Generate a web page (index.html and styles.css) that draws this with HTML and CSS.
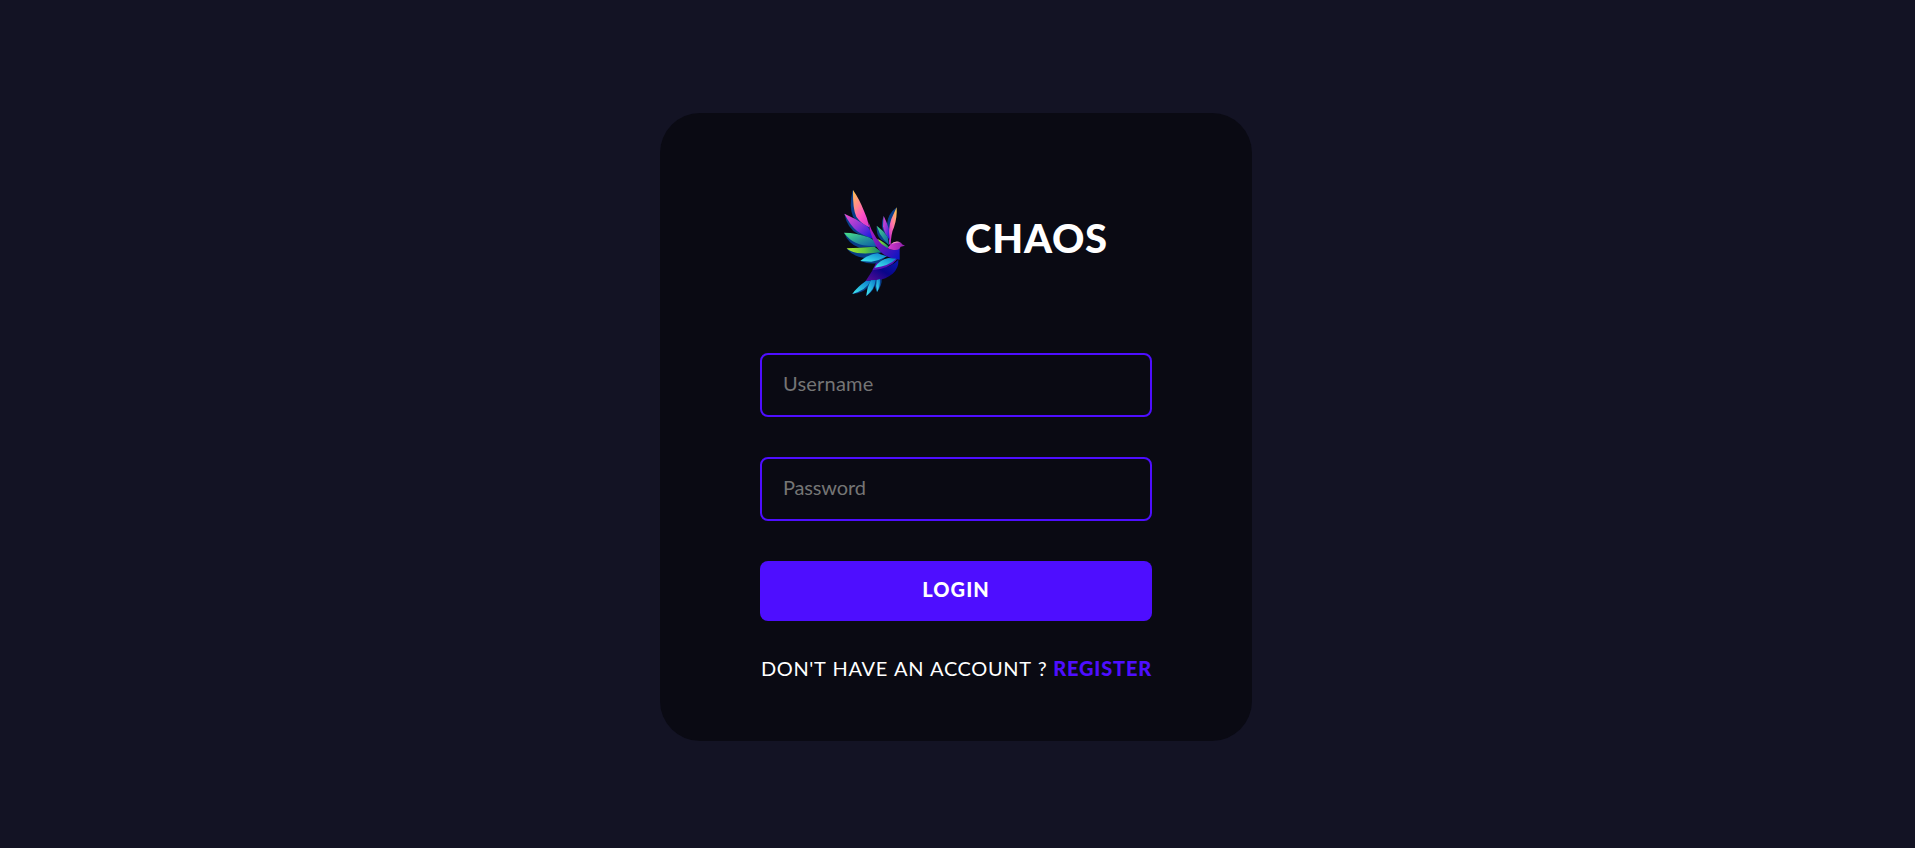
FILE: index.html
```html
<!DOCTYPE html>
<html lang="en">
<head>
<meta charset="utf-8">
<title>Chaos</title>
<link rel="stylesheet" href="styles.css">
</head>
<body>
<main class="page">
<form class="card">
<div class="brand">
<svg class="logo" viewBox="579 267 189 324" aria-hidden="true">
<defs>
<linearGradient id="flame" x1="0" y1="0" x2=".6" y2="1"><stop offset="0" stop-color="#ffc64f"/><stop offset=".45" stop-color="#ff8790"/><stop offset=".75" stop-color="#ff4fc8"/><stop offset="1" stop-color="#e03fc8"/></linearGradient>
<linearGradient id="flame2" x1=".8" y1="0" x2=".2" y2="1"><stop offset="0" stop-color="#ffc64f"/><stop offset=".5" stop-color="#ff70ad"/><stop offset="1" stop-color="#c020d0"/></linearGradient>
<linearGradient id="violet" x1="0" y1="0" x2="1" y2="1"><stop offset="0" stop-color="#f04fc8"/><stop offset=".5" stop-color="#8a35d8"/><stop offset="1" stop-color="#0a18e0"/></linearGradient>
<linearGradient id="teal" x1="0" y1="0" x2="1" y2="1"><stop offset="0" stop-color="#4be58a"/><stop offset=".55" stop-color="#25939b"/><stop offset="1" stop-color="#0a5aa5"/></linearGradient>
<linearGradient id="lime"><stop offset="0" stop-color="#b5ea2c"/><stop offset=".5" stop-color="#65c940"/><stop offset="1" stop-color="#087f78"/></linearGradient>
<linearGradient id="cyan" x1="0" y1="1" x2="1" y2="0"><stop offset="0" stop-color="#43edf0"/><stop offset="1" stop-color="#087acb"/></linearGradient>
<linearGradient id="neck" x1="0" y1="0" x2="1" y2="1"><stop offset="0" stop-color="#c51fc5"/><stop offset=".55" stop-color="#5b18bb"/><stop offset="1" stop-color="#0714c5"/></linearGradient>
<linearGradient id="body" x1="0" y1="1" x2="1" y2="0"><stop offset="0" stop-color="#5c0c98"/><stop offset=".5" stop-color="#0a0588"/><stop offset="1" stop-color="#0719b0"/></linearGradient>
<linearGradient id="head"><stop offset="0" stop-color="#d83bd0"/><stop offset="1" stop-color="#8c20a8"/></linearGradient>
</defs>
<g fill="#073d88">
<path d="M608 270Q596 320 609 350Q625 373 660 390L650 360Z"/>
<path d="M583 341Q592 386 624 402Q645 410 665 415L662 395Z"/>
<path d="M582 398Q595 432 628 443L684 441L670 420Z"/>
<path d="M590 446Q612 472 646 474Q674 471 696 456Z"/>
<path d="M631 483Q662 495 687 488L710 468Z"/>
<path d="M740 322Q713 342 711 372L716 412L722 410Z"/>
<path d="M701 348Q688 379 705 402L718 414Z"/>
<path d="M680 377Q678 404 692 418L717 434Z"/>
<path d="M674 503Q718 505 741 478L720 474Z"/>
<path d="M607 582Q640 578 652 563L649 588Q670 574 673 558L681 576Q697 557 695 535L650 540Z"/>
</g>
<path fill="url(#flame)" d="M609 270Q628 297 642 333Q652 353 658 382Q633 371 619 350Q608 329 609 270Z"/>
<path fill="url(#violet)" d="M583 341Q620 356 651 379Q665 394 669 416Q640 407 621 393Q602 378 583 341Z"/>
<path fill="url(#teal)" d="M582 398Q620 398 656 412Q674 419 683 437Q645 441 617 428Q597 419 582 398Z"/>
<path fill="url(#lime)" d="M590 445Q630 444 673 440L695 456Q653 463 622 459Q602 456 590 445Z"/>
<path fill="url(#cyan)" d="M631 483Q650 465 682 460L711 469Q688 482 664 485Z"/>
<path fill="url(#flame2)" d="M740 322Q742 352 732 382Q723 400 722 436L717 432Q714 384 724 357Z"/>
<path fill="url(#violet)" d="M701 348Q710 365 716 385L719 420Q701 397 699 379Z"/>
<path fill="url(#teal)" d="M680 377Q700 391 713 410L717 436Q699 417 690 402Z"/>
<path fill="url(#lime)" d="M681 416Q704 426 716 440L711 447Q692 435 681 416Z"/>
<path fill="url(#body)" d="M647 543L672 504Q719 507 745 479Q747 503 728 521Q707 538 682 540Q660 540 647 543Z"/>
<path fill="#5611b5" d="M678 490L711 480L742 478Q717 507 667 511Z"/>
<path fill="url(#neck)" d="M655 365Q673 421 713 445Q730 454 749 444V479Q709 475 690 454Q663 423 655 365Z"/>
<path fill="url(#head)" d="M713 444Q724 426 742 425Q754 425 756 433L765 437L752 440Q747 453 727 449Q718 448 713 444Z"/>
<path fill="#f39ac0" d="M722 433Q735 420 751 427Q740 427 722 433Z"/>
<path fill="url(#cyan)" d="M674 503Q688 479 715 474L739 476Q716 498 674 503Z"/>
<g fill="url(#cyan)"><path d="M607 582Q621 561 648 543H662Q650 569 607 582Z"/><path d="M649 588Q652 559 663 541L677 540Q674 567 649 588Z"/><path d="M681 576Q677 555 680 540L690 537Q692 557 681 576Z"/></g>
</svg>
<h1 class="title">CHAOS</h1>
</div>
<input class="field username" type="text" placeholder="Username">
<input class="field password" type="password" placeholder="Password">
<button class="submit" type="button">LOGIN</button>
<div class="hint"><span class="question">DON'T HAVE AN ACCOUNT ?</span><a class="register">REGISTER</a></div>
</form>
</main>
</body>
</html>
```
FILE: styles.css
```css
* { box-sizing: border-box; }
body {
  margin: 0;
  background: #131324;
  font-family: Lato, "Open Sans", sans-serif;
}
.page {
  height: 848px;
  display: flex;
  justify-content: center;
  padding: 113px 3px 0 0;
}
.card {
  width: 592px;
  height: 628px;
  padding: 60px 100px;
  border-radius: 40px;
  background: #0a0a13;
  display: flex;
  flex-direction: column;
  gap: 40px;
}
.brand {
  height: 140px;
  padding: 16px 0 0 83px;
  display: flex;
  align-items: flex-start;
}
.logo { width: 63px; height: 108px; }
.title {
  margin: 24px 0 0 59px;
  color: #fff;
  font-size: 40px;
  line-height: 50px;
  font-weight: 900;
  letter-spacing: 0.8px;
}
.field {
  width: 100%;
  height: 64px;
  padding: 0 20px 4px 21px;
  border: 2px solid #4e0eff;
  border-radius: 8px;
  background: transparent;
  color: #fff;
  font: 20px Lato, sans-serif;
}
.field::placeholder { color: #757575; opacity: 1; }
.username { letter-spacing: 0.2px; }
.password { letter-spacing: -0.15px; }
.submit {
  height: 60px;
  flex: none;
  border: 0;
  border-radius: 8px;
  padding: 0 0 4px;
  background: #4e0eff;
  color: #fff;
  font: 900 20px Lato, sans-serif;
  letter-spacing: 1.1px;
}
.hint {
  display: flex;
  justify-content: space-between;
  padding: 0 0 0 1px;
  margin-top: -5px;
  color: #fff;
  font-size: 20px;
  line-height: 24px;
  white-space: nowrap;
}
.question { letter-spacing: 0.62px; word-spacing: 1px; }
.register { color: #4e0eff; font-weight: 900; letter-spacing: 0.8px; }
```
